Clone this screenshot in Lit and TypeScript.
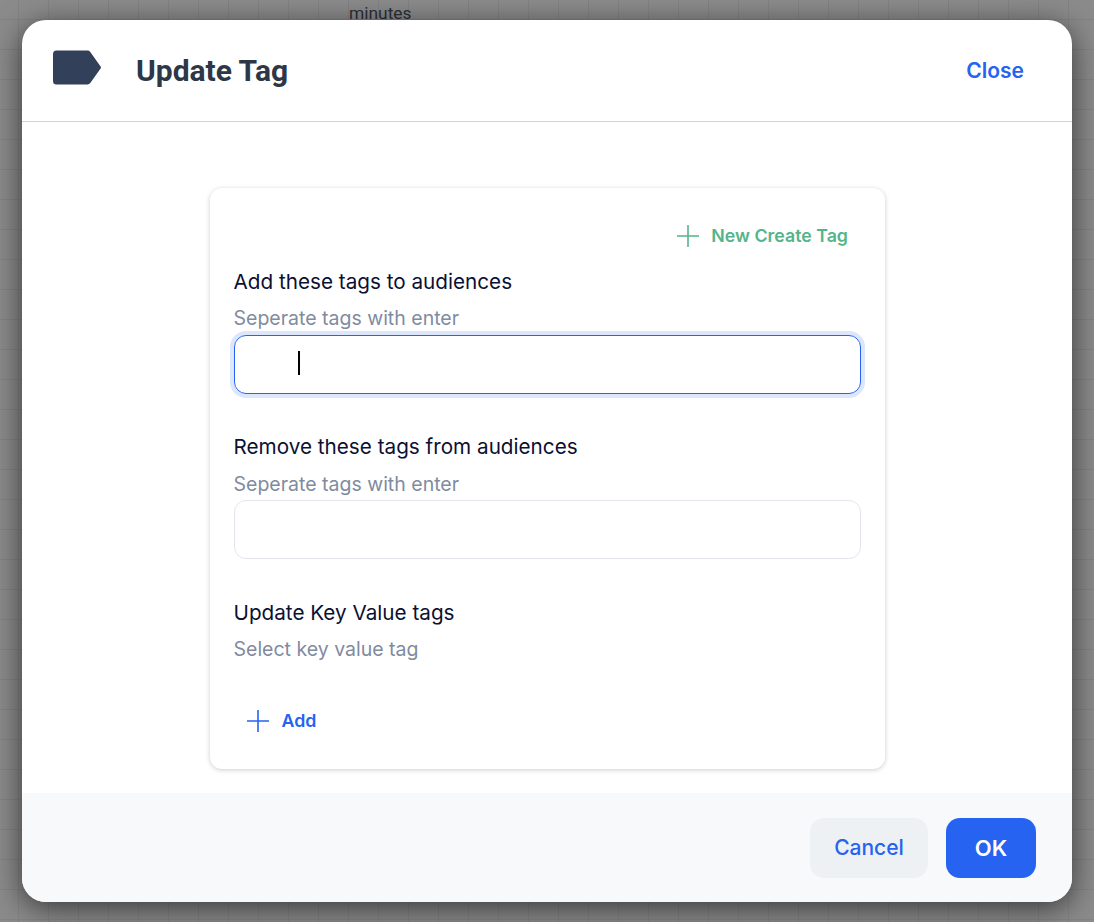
import { LitElement, html, css } from "lit";
import { customElement } from "lit/decorators.js";

const plus = (cls: string) => html`<svg class="plus ${cls}" width="24" height="24" viewBox="0 0 24 24" fill="none" stroke="currentColor" stroke-width="1.6"><path d="M12 1v22M1 12h22"/></svg>`;

@customElement("app-root")
export class AppRoot extends LitElement {
  static styles = css`
    :host { display: block; width: 1094px; height: 922px; position: relative; overflow: hidden;
      font-family: Inter, "Liberation Sans", sans-serif;
      background-color: #8b8b8b;
      background-image: linear-gradient(#838383 1px, transparent 1px), linear-gradient(90deg, #838383 1px, transparent 1px);
      background-size: 30px 30px; background-position: 18px 19px; }
    * { box-sizing: border-box; }
    .behind { position: absolute; left: 349px; top: 4px; font: 17.4px/19px Roboto, sans-serif; color: #2c2f36; }
    .wrap { padding: 20px 22px; position: relative; }
    .modal { width: 1050px; height: 882px; background: #fff; border-radius: 24px; overflow: hidden;
      box-shadow: 0 6px 30px rgba(0,0,0,.6); display: flex; flex-direction: column; }
    .header { height: 102px; flex: none; border-bottom: 1px solid #d0d2d6; display: flex; align-items: center; padding: 0 48px 0 31px; }
    .tagicon { width: 48px; height: 36px; margin-bottom: 5px; flex: none; }
    .title { margin-left: 35px; font: 700 30px/36px Roboto, sans-serif; color: #2d3748; flex: 1; }
    .close { font: 600 21px/26px Inter, sans-serif; color: #2563f0; }
    .body { flex: 1; display: flex; align-items: flex-start; padding: 66px 0 0 188px; }
    .card { width: 675px; height: 581px; background: #fff; border-radius: 12px; box-shadow: 0 1px 5px rgba(0,0,0,.2);
      padding: 36px 24px 0 23.5px; display: flex; flex-direction: column; }
    .newtag { display: flex; justify-content: flex-end; align-items: center; gap: 11px; color: #55b48a; font-weight: 600; font-size: 17.8px; line-height: 24px; padding-right: 13px; margin-bottom: 21px; }
    .label { font-size: 20.7px; line-height: 26px; color: #0c1033; font-weight: 400; }
    .hint { font-size: 19.5px; line-height: 26px; color: #7f8ba0; margin-top: 10.4px; }
    .input { height: 59px; width: 627px; margin-left: .5px; border: 1px solid #e2e6ec; border-radius: 12px; margin-top: 3.6px; margin-bottom: 40.4px; position: relative; }
    .input.focus { border-color: #2563f0; box-shadow: 0 0 0 4px #dce6fc; }
    .caret { position: absolute; left: 63px; top: 15px; width: 2px; height: 24px; background: #000; }
    .add { display: flex; align-items: center; gap: 12px; color: #2563f0; font-weight: 600; font-size: 17.8px; line-height: 24px; margin: 47px 0 0 12px; }
    .footer { height: 109px; flex: none; background: #f8f9fb; display: flex; justify-content: flex-end; align-items: flex-start; gap: 18px; padding: 25px 36px 0 0; }
    .btn { height: 60px; border-radius: 14px; border: 0; font: 600 22px/26px Inter, sans-serif; display: flex; align-items: center; justify-content: center; }
    .cancel { width: 118px; background: #eef1f4; color: #2563f0; font-size: 21px; font-weight: 500; }
    .ok { width: 90px; background: #2563f0; color: #fff; }
  `;

  render() {
    return html`
      <div class="behind">minutes</div>
      <div class="wrap">
        <div class="modal">
          <div class="header">
            <svg class="tagicon" viewBox="0 0 48 36"><path d="M3.5 0.5h31a3.5 3.5 0 0 1 2.8 1.4L47.6 16.4a2 2 0 0 1 0 2.2L37.3 33.1a3.5 3.5 0 0 1-2.8 1.4H3.5a3.5 3.5 0 0 1-3.5-3.5V4a3.5 3.5 0 0 1 3.5-3.5z" fill="#334059"/></svg>
            <div class="title">Update Tag</div>
            <div class="close">Close</div>
          </div>
          <div class="body">
            <div class="card">
              <div class="newtag">${plus("g")}<span>New Create Tag</span></div>
              <div class="label">Add these tags to audiences</div>
              <div class="hint">Seperate tags with enter</div>
              <div class="input focus"><div class="caret"></div></div>
              <div class="label">Remove these tags from audiences</div>
              <div class="hint">Seperate tags with enter</div>
              <div class="input"></div>
              <div class="label">Update Key Value tags</div>
              <div class="hint">Select key value tag</div>
              <div class="add">${plus("b")}<span>Add</span></div>
            </div>
          </div>
          <div class="footer">
            <div class="btn cancel">Cancel</div>
            <div class="btn ok">OK</div>
          </div>
        </div>
      </div>
    `;
  }
}
